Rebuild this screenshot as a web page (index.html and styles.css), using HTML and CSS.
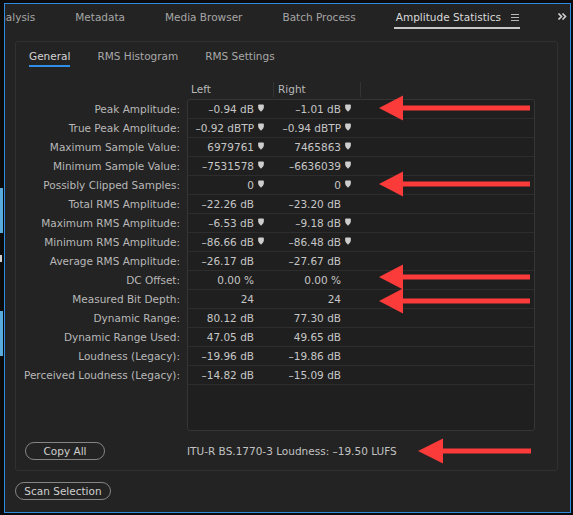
FILE: index.html
```html
<!DOCTYPE html>
<html>
<head>
<meta charset="utf-8">
<link rel="stylesheet" href="styles.css">
</head>
<body>
<svg width="0" height="0" class="defs">
  <defs>
    <symbol id="pin" viewBox="0 0 7 9">
      <path d="M1.2 0.4 H5.8 Q6.8 0.4 6.8 1.4 V4.3 Q6.8 6.4 3.5 8.8 Q0.2 6.4 0.2 4.3 V1.4 Q0.2 0.4 1.2 0.4 Z"/>
    </symbol>
  </defs>
</svg>
<div class="app">
  <div class="edge">
    <div class="edge-blue first"></div>
    <div class="edge-white"></div>
    <div class="edge-blue second"></div>
  </div>
  <div class="panel">
    <div class="tabbar">
      <div class="tab clipped">Analysis</div>
      <div class="tab">Metadata</div>
      <div class="tab">Media Browser</div>
      <div class="tab">Batch Process</div>
      <div class="tab active">Amplitude Statistics
        <svg class="menu" width="8" height="8" viewBox="0 0 8 8"><rect x="0" y="0" width="8" height="1"/><rect x="0" y="3" width="8" height="1"/><rect x="0" y="6" width="8" height="1"/></svg>
      </div>
      <svg class="more" width="9" height="7" viewBox="0 0 9 7"><path d="M0.5 0.5 L3.5 3.5 L0.5 6.5 M4.5 0.5 L7.5 3.5 L4.5 6.5"/></svg>
    </div>
    <div class="inner">
      <div class="subtabs">
        <div class="subtab active">General</div>
        <div class="subtab">RMS Histogram</div>
        <div class="subtab">RMS Settings</div>
      </div>
      <div class="stats">
        <div class="labels">
          <div class="label">Peak Amplitude:</div>
          <div class="label">True Peak Amplitude:</div>
          <div class="label">Maximum Sample Value:</div>
          <div class="label">Minimum Sample Value:</div>
          <div class="label">Possibly Clipped Samples:</div>
          <div class="label">Total RMS Amplitude:</div>
          <div class="label">Maximum RMS Amplitude:</div>
          <div class="label">Minimum RMS Amplitude:</div>
          <div class="label">Average RMS Amplitude:</div>
          <div class="label">DC Offset:</div>
          <div class="label">Measured Bit Depth:</div>
          <div class="label">Dynamic Range:</div>
          <div class="label">Dynamic Range Used:</div>
          <div class="label">Loudness (Legacy):</div>
          <div class="label">Perceived Loudness (Legacy):</div>
        </div>
        <div class="tablewrap">
          <div class="thead">
            <div class="th">Left</div>
            <div class="th">Right</div>
          </div>
          <div class="tbox">
            <div class="row"><div class="cell l">–0.94 dB<span class="slot"><svg class="pin"><use href="#pin"/></svg></span></div><div class="cell r">–1.01 dB<span class="slot"><svg class="pin"><use href="#pin"/></svg></span></div></div>
            <div class="row"><div class="cell l">–0.92 dBTP<span class="slot"><svg class="pin"><use href="#pin"/></svg></span></div><div class="cell r">–0.94 dBTP<span class="slot"><svg class="pin"><use href="#pin"/></svg></span></div></div>
            <div class="row"><div class="cell l">6979761<span class="slot"><svg class="pin"><use href="#pin"/></svg></span></div><div class="cell r">7465863<span class="slot"><svg class="pin"><use href="#pin"/></svg></span></div></div>
            <div class="row"><div class="cell l">–7531578<span class="slot"><svg class="pin"><use href="#pin"/></svg></span></div><div class="cell r">–6636039<span class="slot"><svg class="pin"><use href="#pin"/></svg></span></div></div>
            <div class="row"><div class="cell l">0<span class="slot"><svg class="pin"><use href="#pin"/></svg></span></div><div class="cell r">0<span class="slot"><svg class="pin"><use href="#pin"/></svg></span></div></div>
            <div class="row"><div class="cell l">–22.26 dB<span class="slot"></span></div><div class="cell r">–23.20 dB<span class="slot"></span></div></div>
            <div class="row"><div class="cell l">–6.53 dB<span class="slot"><svg class="pin"><use href="#pin"/></svg></span></div><div class="cell r">–9.18 dB<span class="slot"><svg class="pin"><use href="#pin"/></svg></span></div></div>
            <div class="row"><div class="cell l">–86.66 dB<span class="slot"><svg class="pin"><use href="#pin"/></svg></span></div><div class="cell r">–86.48 dB<span class="slot"><svg class="pin"><use href="#pin"/></svg></span></div></div>
            <div class="row"><div class="cell l">–26.17 dB<span class="slot"></span></div><div class="cell r">–27.67 dB<span class="slot"></span></div></div>
            <div class="row"><div class="cell l">0.00 %<span class="slot"></span></div><div class="cell r">0.00 %<span class="slot"></span></div></div>
            <div class="row"><div class="cell l">24<span class="slot"></span></div><div class="cell r">24<span class="slot"></span></div></div>
            <div class="row"><div class="cell l">80.12 dB<span class="slot"></span></div><div class="cell r">77.30 dB<span class="slot"></span></div></div>
            <div class="row"><div class="cell l">47.05 dB<span class="slot"></span></div><div class="cell r">49.65 dB<span class="slot"></span></div></div>
            <div class="row"><div class="cell l">–19.96 dB<span class="slot"></span></div><div class="cell r">–19.86 dB<span class="slot"></span></div></div>
            <div class="row"><div class="cell l">–14.82 dB<span class="slot"></span></div><div class="cell r">–15.09 dB<span class="slot"></span></div></div>
          </div>
        </div>
      </div>
      <div class="footer">
        <div class="footer-left"><button class="pill copy">Copy All</button></div>
        <div class="itu">ITU-R BS.1770-3 Loudness: –19.50 LUFS</div>
      </div>
    </div>
    <button class="pill scan">Scan Selection</button>
  </div>
</div>
<svg class="arrows" width="573" height="515" viewBox="0 0 573 515">
  <g class="arrow" transform="translate(379 108)"><polygon points="0,0 24,-12.5 24,12.5"/><rect x="23" y="-2.5" width="128" height="5"/></g>
  <g class="arrow" transform="translate(379 184)"><polygon points="0,0 24,-12.5 24,12.5"/><rect x="23" y="-2.5" width="128" height="5"/></g>
  <g class="arrow" transform="translate(379 277)"><polygon points="0,0 24,-12.5 24,12.5"/><rect x="23" y="-2.5" width="128" height="5"/></g>
  <g class="arrow" transform="translate(379 301)"><polygon points="0,0 24,-12.5 24,12.5"/><rect x="23" y="-2.5" width="128" height="5"/></g>
  <g class="arrow" transform="translate(418 451)"><polygon points="0,0 25,-12.5 25,12.5"/><rect x="24" y="-2.5" width="89" height="5"/></g>
</svg>
</body>
</html>
```

FILE: styles.css
```css
html, body {
  margin: 0;
  padding: 0;
}
body {
  background: #0b0b0b;
  width: 573px;
  height: 515px;
  overflow: hidden;
  position: relative;
  font-family: "DejaVu Sans", "Liberation Sans", sans-serif;
  font-size: 10.5px;
  color: #c4c4c4;
}
.defs {
  position: absolute;
}
.app {
  display: flex;
  align-items: flex-start;
}
.edge {
  width: 4px;
  height: 515px;
  display: flex;
  flex-direction: column;
  align-items: flex-start;
}
.edge-blue {
  width: 3px;
  height: 45px;
  background: #58acde;
}
.edge-blue.first { margin-top: 188px; }
.edge-white {
  width: 2px;
  height: 7px;
  margin-top: 22px;
  background: #cfcfcf;
}
.edge-blue.second { margin-top: 49px; }

.panel {
  box-sizing: border-box;
  width: 567px;
  height: 510px;
  margin-top: 3px;
  border: 1px solid #2f8ae0;
  background: #232323;
  overflow: hidden;
  display: flex;
  flex-direction: column;
  align-items: flex-start;
}
.tabbar {
  display: flex;
  align-items: flex-start;
  align-self: stretch;
  height: 25px;
  padding-right: 3px;
  gap: 36px;
}
.tab {
  padding: 6px 2px 3px;
  line-height: 14px;
  border-bottom: 2px solid transparent;
  color: #a6a6a6;
  white-space: nowrap;
  display: flex;
  align-items: center;
}
.tab.clipped {
  margin-left: -15px;
}
.tab.active {
  color: #dadada;
  border-bottom-color: #c9c9c9;
  padding-right: 1px;
  gap: 10px;
}
.menu {
  fill: #b8b8b8;
  margin-top: 1px;
}
.more {
  margin-left: auto;
  margin-top: 9px;
  fill: none;
  stroke: #cfcfcf;
  stroke-width: 1.6;
}

.inner {
  box-sizing: border-box;
  width: 543px;
  height: 430px;
  margin: 12px 0 0 10px;
  border: 1px solid #303030;
  border-radius: 3px;
  display: flex;
  flex-direction: column;
}
.subtabs {
  display: flex;
  padding-left: 13px;
  gap: 27px;
}
.subtab {
  padding: 7px 0 2px;
  line-height: 14px;
  border-bottom: 2px solid transparent;
  color: #a8a8a8;
}
.subtab.active {
  color: #d4d4d4;
  border-bottom-color: #2f8ee8;
}

.stats {
  display: grid;
  grid-template-columns: 165px 348px;
  column-gap: 6px;
  margin-top: 13px;
}
.labels {
  padding-top: 20px;
  text-align: right;
  color: #b8b8b8;
}
.label {
  height: 19px;
  line-height: 18px;
  padding-right: 1px;
  white-space: nowrap;
}
.thead {
  display: flex;
  height: 19px;
}
.th {
  box-sizing: border-box;
  width: 87px;
  height: 15px;
  margin-top: 2px;
  padding-left: 4px;
  line-height: 15px;
  border-right: 1px solid #333333;
  color: #b8b8b8;
}
.tbox {
  box-sizing: border-box;
  height: 332px;
  border: 1px solid #353535;
  border-radius: 3px;
  background: #1f1f1f;
}
.row {
  display: flex;
  height: 18px;
  border-bottom: 1px solid #2d2d2d;
}
.cell {
  display: flex;
  justify-content: flex-end;
  align-items: center;
  line-height: 18px;
  white-space: nowrap;
  color: #c6c6c6;
}
.cell.l { width: 86px; }
.cell.r { width: 87px; }
.slot {
  width: 20px;
  height: 18px;
  display: flex;
  align-items: center;
}
.pin {
  width: 6px;
  height: 8px;
  margin-left: 4px;
  margin-bottom: 2px;
  fill: #cdcdcd;
}

.footer {
  display: grid;
  grid-template-columns: 165px 1fr;
  column-gap: 6px;
  margin-top: 11px;
  align-items: center;
}
.footer-left {
  padding-left: 9px;
}
.itu {
  color: #c2c2c2;
  line-height: 18px;
  white-space: nowrap;
}
.pill {
  box-sizing: border-box;
  height: 18px;
  padding: 0;
  border: 1px solid #858585;
  border-radius: 9px;
  background: transparent;
  color: #cfcfcf;
  font-family: "DejaVu Sans", "Liberation Sans", sans-serif;
  font-size: 10.5px;
  line-height: 16px;
}
.pill.copy { width: 80px; }
.pill.scan {
  width: 96px;
  margin: 11px 0 0 10px;
}

.arrows {
  position: absolute;
  left: 0;
  top: 0;
  pointer-events: none;
}
.arrow {
  fill: #fb3a3a;
}
```
